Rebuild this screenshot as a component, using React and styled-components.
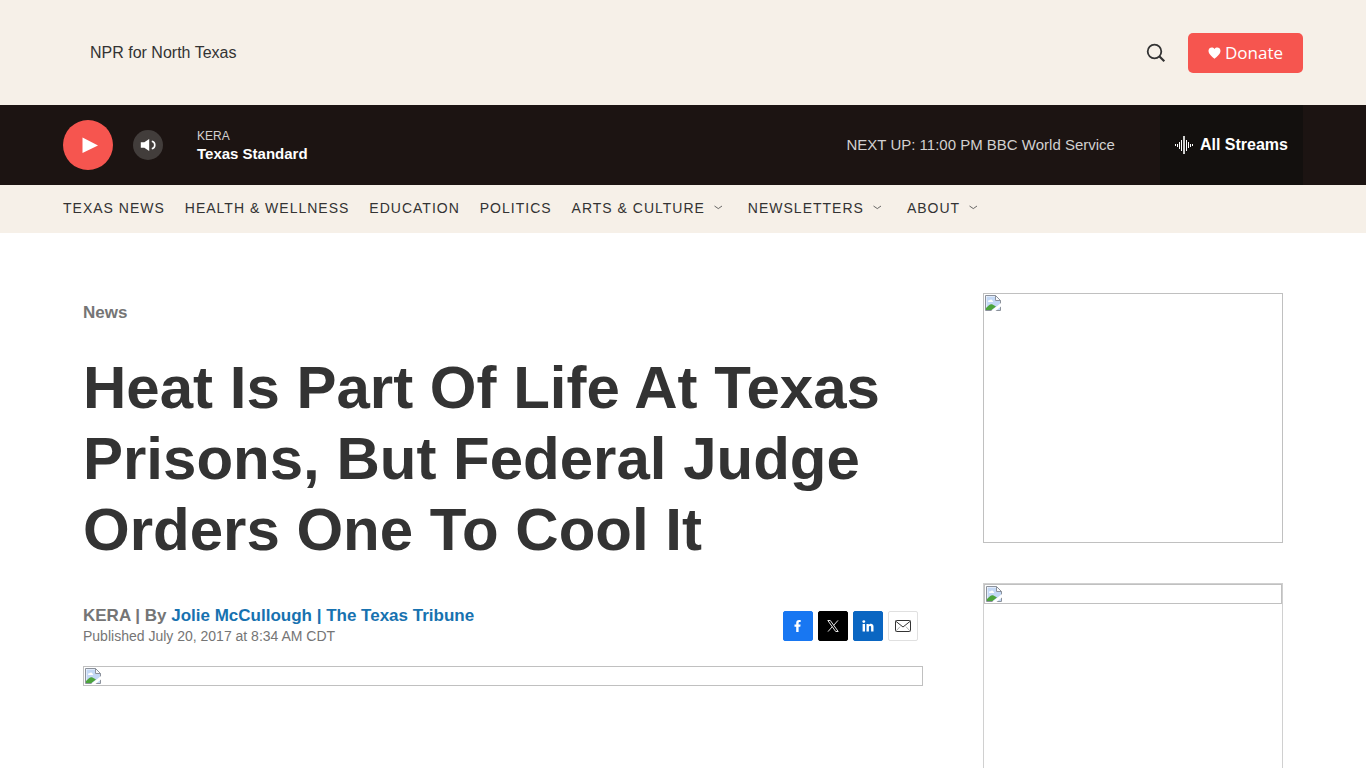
import React from "react";
import styled, { createGlobalStyle } from "styled-components";

const GlobalStyle = createGlobalStyle`
  * { box-sizing: border-box; }
  body {
    margin: 0;
    background: #fff;
    color: #333;
    font-family: "Liberation Sans", Arial, sans-serif;
    font-size: 16px;
  }
  a { color: inherit; text-decoration: none; }
  button { font: inherit; border: 0; padding: 0; cursor: pointer; }
  svg { display: block; flex: none; }
`;

const Container = styled.div`
  display: flex;
  align-items: center;
  width: 100%;
  max-width: 1240px;
  margin: 0 auto;
`;

const Header = styled.header`
  background: #f6f0e8;
  padding: 32px 20px;
`;

const Tagline = styled.span`
  flex: 1;
  padding-left: 27px;
  line-height: 41px;
`;

const SearchButton = styled.button`
  display: flex;
  align-items: center;
  justify-content: center;
  width: 40px;
  height: 40px;
  margin-right: 12px;
  background: none;
`;

const DonateLink = styled.a`
  display: flex;
  align-items: center;
  justify-content: center;
  gap: 4px;
  padding: 0 20px;
  height: 40px;
  border-radius: 5px;
  background: #f6554f;
  color: #fff;
  font: 17px "Open Sans", sans-serif;
`;

const Player = styled.section`
  background: #1c1412;
  padding: 0 20px;
`;

const RoundButton = styled.button`
  display: flex;
  align-items: center;
  justify-content: center;
  width: ${(p) => p.$size}px;
  height: ${(p) => p.$size}px;
  margin-right: ${(p) => p.$after}px;
  border-radius: 50%;
  background: ${(p) => p.$color};
`;

const NowPlaying = styled.div`
  flex: 1;
  color: #fff;
`;

const Station = styled.div`
  color: #d2d0d0;
  font-size: 12px;
  line-height: 18px;
`;

const Program = styled.a`
  display: block;
  font-size: 15px;
  font-weight: 700;
  line-height: 18px;
`;

const NextUp = styled.span`
  margin-right: 45px;
  color: #d2d0d0;
  font-size: 15px;
  line-height: 18px;
`;

const StreamsButton = styled.button`
  display: flex;
  align-items: center;
  gap: 7px;
  height: 80px;
  padding: 0 15px;
  background: #13100e;
  color: #fff;
  font-weight: 700;
`;

const Nav = styled.nav`
  background: #f6f0e8;
  padding: 0 20px;
`;

const NavList = styled(Container).attrs({ as: "ul" })`
  gap: 20px;
  height: 48px;
  padding: 0 0 2px;
  list-style: none;
`;

const NavItem = styled.li`
  display: flex;
  align-items: center;
  gap: 8px;
  font-size: 14px;
  letter-spacing: 1px;
  line-height: 20px;
  text-transform: uppercase;
`;

const MenuToggle = styled.button`
  display: flex;
  width: 15px;
  padding-bottom: 2px;
  background: none;
  color: inherit;
`;

const Main = styled.main`
  display: flex;
  align-items: flex-start;
  gap: 60px;
  max-width: 1240px;
  margin: 0 auto;
  padding: 60px 20px;
`;

const Article = styled.article`
  flex: 1;
  min-width: 0;
`;

const Section = styled.a`
  display: block;
  margin-top: 10px;
  color: #757575;
  font-size: 17px;
  font-weight: 700;
  line-height: 20px;
`;

const Title = styled.h1`
  margin: 29px 0 40px;
  font-size: 60px;
  font-weight: 700;
  line-height: 71px;
`;

const Meta = styled.div`
  display: flex;
  align-items: center;
  justify-content: space-between;
  margin-bottom: 20px;
  padding-right: 5px;
  color: #757575;
`;

const Byline = styled.div`
  font-size: 17px;
  font-weight: 700;
  line-height: 21px;
  a { color: #1772b0; }
`;

const Published = styled.div`
  font-size: 14px;
  line-height: 20px;
`;

const Share = styled.div`
  display: flex;
  gap: 5px;
`;

const ShareLink = styled.a`
  display: flex;
  align-items: center;
  justify-content: center;
  width: 30px;
  height: 30px;
  border: 1px solid ${(p) => p.$border || p.$color};
  border-radius: 2px;
  background: ${(p) => p.$color};
`;

const Aside = styled.aside`
  display: flex;
  flex-direction: column;
  gap: 40px;
  width: 300px;
`;

const AdSlot = styled.div`
  height: 250px;
  border: 1px solid #d0d0d0;
`;

const Placeholder = styled.div`
  height: ${(p) => p.$height}px;
  padding: 1px;
  border: 1px solid #c0c0c0;
`;

const BrokenIcon = () => (
  <svg width="16" height="16" viewBox="0 0 16 16">
    <path d="M.5.5h10l5 5v10H.5z" fill="#fff" />
    <path d="M1.500 1.500h9v4.500H15v9H1.500z" fill="#c3d8f5" />
    <path d="M3 6.500c0-1 .9-1.500 1.700-1.200C5.300 4.200 7 4.400 7.200 5.500c.9 0 1.300 1 .6 1.500H3.500z" fill="#fff" />
    <path d="M1 15v-2C3 11 5 8.800 7 9.300l4 2.200L6.500 15z" fill="#4ca43c" />
    <path d="M15.500 15.500V5.500l-5-5H.5v15z" fill="none" stroke="#8c929c" />
    <path d="M10.500.5v5h5z" fill="#f7f8fa" stroke="#8c929c" />
    <path d="M6 16 16 8v3.500L10.500 16z" fill="#fff" />
  </svg>
);

const SearchIcon = () => (
  <svg width="20" height="20" viewBox="0 0 20 20" fill="none" stroke="#333" strokeWidth="1.800">
    <circle cx="8.500" cy="8.500" r="6.800" />
    <path d="m13.300 13.300 5 5" strokeWidth="2.200" />
  </svg>
);

const HeartIcon = () => (
  <svg width="13" height="12" viewBox="0 0 13 12" fill="#fff">
    <path d="M6.500 11.700C4.300 9.900.5 7.300.5 3.800.5.600 4.600-.7 6.500 2.100 8.400-.7 12.500.6 12.500 3.800c0 3.500-3.800 6.100-6 7.900z" />
  </svg>
);

const PlayIcon = () => (
  <svg width="20" height="16" viewBox="0 0 20 16" fill="#fff">
    <path d="m4.500 .5 15.500 8L4.500 16z" />
  </svg>
);

const VolumeIcon = () => (
  <svg width="16" height="14" viewBox="0 0 16 14">
    <path d="M.8 4.300h3.500L9.200 1v12L4.300 9.700H.8z" fill="#fff" />
    <path d="M11.800 3.300c4 .9 4 6.500 0 7.400" fill="none" stroke="#fff" strokeWidth="1.600" />
  </svg>
);

const WaveIcon = () => (
  <svg width="18" height="18" viewBox="0 0 18 18" fill="none" stroke="#fff">
    <path d="M.5 8v2M2.500 8v3M4.500 6v7M6.500 4v11M11.500 4v11M13.500 6v6M15.500 8v3M17.500 8v2" />
    <path d="M9 0v18" strokeWidth="1.600" />
  </svg>
);

const Chevron = () => (
  <svg width="10" height="5" viewBox="0 0 10 5" fill="none" stroke="#444" strokeWidth=".8">
    <path d="m1.500 1 3.800 2.600L9 1" />
  </svg>
);

const FacebookIcon = () => (
  <svg width="8" height="12" viewBox="0 0 8 12" fill="#fff">
    <path d="M2.200 12V6.700H.5V4.500h1.700V3c0-1.900 1-3 2.900-3 .8 0 1.600.1 1.600.1V2h-.9c-.9 0-1.200.5-1.200 1.100v1.400h2L6.300 6.700H4.600V12z" />
  </svg>
);

const XIcon = () => (
  <svg width="12" height="12" viewBox="0 0 12 12" fill="none" stroke="#fff" strokeWidth=".9">
    <path d="M.8.5h2.500l7.900 11H8.700zM11 .4 6.700 5.300M5.300 6.700 1 11.600" />
  </svg>
);

const LinkedInIcon = () => (
  <svg width="12" height="12" viewBox="0 0 12 12" fill="#fff">
    <circle cx="1.800" cy="1.600" r="1.400" />
    <path d="M.6 4h2.400v7.500H.6zM4.500 4h2.300v1c.9-1.700 4.700-1.800 4.700 1.600v4.900H9.100V7.400c0-2-2.200-1.700-2.200 0v4.100H4.500z" />
  </svg>
);

const MailIcon = () => (
  <svg width="18" height="14" viewBox="0 0 18 14" fill="none" stroke="#333">
    <rect x="1.500" y="1.500" width="15" height="11" rx="1" />
    <path d="m1.500 2 7.500 6 7.500-6" />
    <path d="m1.800 12.200 4.200-4.500M16.200 12.200 12 7.700" strokeWidth=".4" />
  </svg>
);

const links = [
  ["Texas News"],
  ["Health & Wellness"],
  ["Education"],
  ["Politics"],
  ["Arts & Culture", true],
  ["Newsletters", true],
  ["About", true],
];

export default function App() {
  return (
    <>
      <GlobalStyle />
      <Header>
        <Container>
          <Tagline>NPR for North Texas</Tagline>
          <SearchButton aria-label="Show search"><SearchIcon /></SearchButton>
          <DonateLink href="#donate"><HeartIcon />Donate</DonateLink>
        </Container>
      </Header>
      <Player aria-label="Live stream">
        <Container>
          <RoundButton $size={50} $after={20} $color="#f6554f" aria-label="Play"><PlayIcon /></RoundButton>
          <RoundButton $size={30} $after={34} $color="#423d3b" aria-label="Volume"><VolumeIcon /></RoundButton>
          <NowPlaying>
            <Station>KERA</Station>
            <Program href="#program">Texas Standard</Program>
          </NowPlaying>
          <NextUp>NEXT UP: 11:00 PM BBC World Service</NextUp>
          <StreamsButton><WaveIcon />All Streams</StreamsButton>
        </Container>
      </Player>
      <Nav aria-label="Main">
        <NavList>
          {links.map(([label, menu]) => (
            <NavItem key={label}>
              <a href="#nav">{label}</a>
              {menu && <MenuToggle aria-label={`${label} menu`}><Chevron /></MenuToggle>}
            </NavItem>
          ))}
        </NavList>
      </Nav>
      <Main>
        <Article>
          <Section href="#news">News</Section>
          <Title>Heat Is Part Of Life At Texas Prisons, But Federal Judge Orders One To Cool It</Title>
          <Meta>
            <div>
              <Byline>KERA | By <a href="#author">Jolie McCullough | The Texas Tribune</a></Byline>
              <Published>Published July 20, 2017 at 8:34 AM CDT</Published>
            </div>
            <Share>
              <ShareLink href="#facebook" $color="#1877f2" aria-label="Facebook"><FacebookIcon /></ShareLink>
              <ShareLink href="#x" $color="#000" aria-label="X"><XIcon /></ShareLink>
              <ShareLink href="#linkedin" $color="#0a66c2" aria-label="LinkedIn"><LinkedInIcon /></ShareLink>
              <ShareLink href="#email" $color="#fff" $border="#e0e0e0" aria-label="Email"><MailIcon /></ShareLink>
            </Share>
          </Meta>
          <Placeholder $height={20}><BrokenIcon /></Placeholder>
        </Article>
        <Aside>
          <Placeholder $height={250}><BrokenIcon /></Placeholder>
          <AdSlot><Placeholder $height={20}><BrokenIcon /></Placeholder></AdSlot>
        </Aside>
      </Main>
    </>
  );
}
